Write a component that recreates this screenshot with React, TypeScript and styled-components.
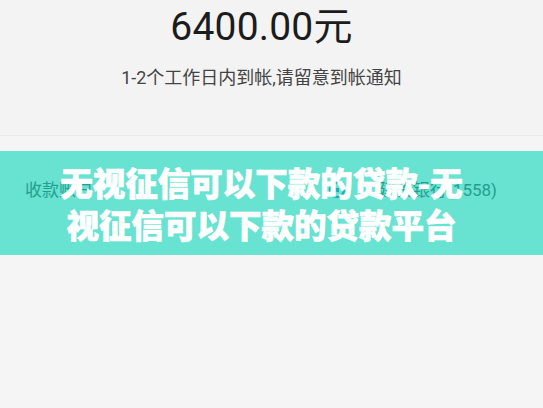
import styled, { createGlobalStyle } from 'styled-components';

const GlobalStyle = createGlobalStyle`
  html, body {
    margin: 0;
    padding: 0;
    background: #f5f5f5;
  }
  body {
    font-family: Roboto, "Noto Sans CJK SC", sans-serif;
  }
`;

const Page = styled.div`
  min-height: 100vh;
  background: #f5f5f5;
  overflow: hidden;
`;

const Header = styled.header`
  height: 136px;
  box-sizing: border-box;
  padding: 4px 20px 0 0;
  background: #f3f3f3;
  border-bottom: 1px solid #e9e9e9;
  display: flex;
  flex-direction: column;
  align-items: center;
`;

const Amount = styled.div`
  font-size: 39px;
  line-height: 47px;
  color: #1c1c1c;
  letter-spacing: 0.2px;
`;

const Notice = styled.div`
  margin-top: 15px;
  font-size: 18px;
  line-height: 24px;
  color: #444;
`;

const Section = styled.section`
  position: relative;
`;

const Row = styled.div`
  display: flex;
  align-items: center;
  justify-content: space-between;
  padding: 28px 46px 0 25px;
  height: 80px;
  box-sizing: border-box;
  font-size: 17px;
  line-height: 24px;
  color: #333;
`;

const Bank = styled.div`
  display: flex;
  align-items: center;
  gap: 34px;
`;

const Banner = styled.div`
  position: absolute;
  top: 15px;
  left: 0;
  right: 0;
  height: 104px;
  box-sizing: border-box;
  padding: 0 68px 0 48px;
  background: rgba(27, 215, 189, 0.65);
  display: flex;
  align-items: center;
  justify-content: center;
`;

const BannerText = styled.h1`
  margin: 0;
  text-align: center;
  font-family: "Noto Sans CJK SC", sans-serif;
  font-weight: 900;
  font-size: 32.5px;
  line-height: 42px;
  color: #ffffff;
  -webkit-text-stroke: 0.7px #ffffff;
`;

export default function App() {
  return (
    <Page>
      <GlobalStyle />
      <Header>
        <Amount>6400.00元</Amount>
        <Notice>1-2个工作日内到帐,请留意到帐通知</Notice>
      </Header>
      <Section>
        <Row>
          <span>收款账户</span>
          <Bank>
            <svg width="16" height="16" viewBox="0 0 16 16">
              <circle cx="8" cy="8" r="7" fill="none" stroke="#1d5fae" strokeWidth="2.2" />
              <rect x="6" y="6" width="4" height="4" fill="#1d5fae" />
            </svg>
            <span>建设银行(1558)</span>
          </Bank>
        </Row>
        <Banner>
          <BannerText>无视征信可以下款的贷款-无视征信可以下款的贷款平台</BannerText>
        </Banner>
      </Section>
    </Page>
  );
}
